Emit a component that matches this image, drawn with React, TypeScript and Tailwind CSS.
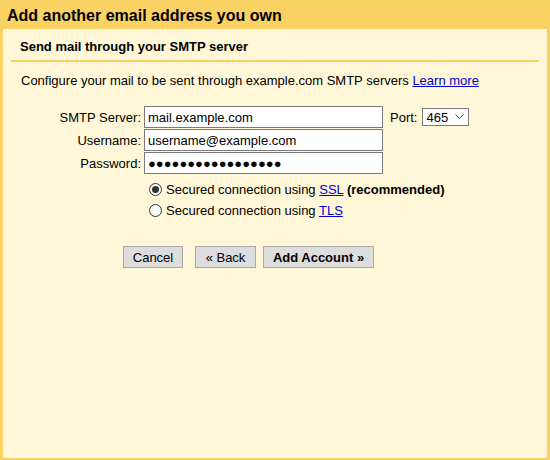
import React from "react";

function Radio({ checked }: { checked?: boolean }) {
  return (
    <span className="w-[13px] h-[13px] rounded-full border border-[#333] bg-white flex items-center justify-center shrink-0">
      {checked && <span className="w-[7px] h-[7px] rounded-full bg-[#333]" />}
    </span>
  );
}

export default function App() {
  const font = { fontFamily: '"Liberation Sans", Arial, sans-serif' };
  return (
    <div className="w-[550px] h-[460px] bg-[#fad163] flex flex-col text-black" style={font}>
      <div className="h-[29px] pl-[7px] flex items-center text-[16px] font-bold leading-none pt-[2px]">
        Add another email address you own
      </div>
      <div className="flex-1 bg-[#fff7d7] mx-[3px] mb-[2px] flex flex-col text-[13px] leading-[15px]">
        <div className="pl-[17px] pt-[10px] pb-[6px] font-bold">Send mail through your SMTP server</div>
        <div className="mx-[8px] h-[2px] bg-[#fad163]" />
        <div className="pl-[18px] mt-[11px]">
          Configure your mail to be sent through example.com SMTP servers{" "}
          <a href="#" className="text-[#0000cc] underline">Learn more</a>
        </div>
        <div className="mt-[18px] flex flex-col gap-[1px]">
          <div className="flex items-center">
            <span className="w-[138px] text-right">SMTP Server:</span>
            <div className="ml-[3px] w-[239px] h-[22px] border border-[#7a7a7a] bg-white px-[3px] flex items-center">mail.example.com</div>
            <span className="ml-[7px]">Port:</span>
            <div className="ml-[5px] w-[47px] h-[18px] border border-[#7a7a7a] bg-white pl-[3px] pr-[4px] flex items-center justify-between">
              <span>465</span>
              <svg width="9" height="6" viewBox="0 0 9 6" fill="none" stroke="#444" strokeWidth="1">
                <path d="M0.5 0.5 L4.5 4.5 L8.5 0.5" />
              </svg>
            </div>
          </div>
          <div className="flex items-center">
            <span className="w-[138px] text-right">Username:</span>
            <div className="ml-[3px] w-[239px] h-[22px] border border-[#7a7a7a] bg-white px-[3px] flex items-center">username@example.com</div>
          </div>
          <div className="flex items-center">
            <span className="w-[138px] text-right">Password:</span>
            <div className="ml-[3px] w-[239px] h-[22px] border border-[#7a7a7a] bg-white px-[3px] flex items-center text-[13px]">●●●●●●●●●●●●●●●●●</div>
          </div>
        </div>
        <div className="mt-[5px] pl-[146px] flex flex-col">
          <div className="h-[21px] flex items-center gap-[4px]">
            <Radio checked />
            <span>
              Secured connection using <a href="#" className="text-[#0000cc] underline">SSL</a>{" "}
              <b>(recommended)</b>
            </span>
          </div>
          <div className="h-[21px] flex items-center gap-[4px]">
            <Radio />
            <span>
              Secured connection using <a href="#" className="text-[#0000cc] underline">TLS</a>
            </span>
          </div>
        </div>
        <div className="mt-[25px] pl-[120px] flex items-center">
          <button className="w-[60px] h-[22px] bg-[#dddddd] border border-[#aaaaaa] flex items-center justify-center">Cancel</button>
          <button className="ml-[12px] w-[61px] h-[22px] bg-[#dddddd] border border-[#aaaaaa] flex items-center justify-center">« Back</button>
          <button className="ml-[7px] w-[111px] h-[22px] bg-[#dddddd] border border-[#aaaaaa] flex items-center justify-center font-bold">Add Account »</button>
        </div>
      </div>
    </div>
  );
}
